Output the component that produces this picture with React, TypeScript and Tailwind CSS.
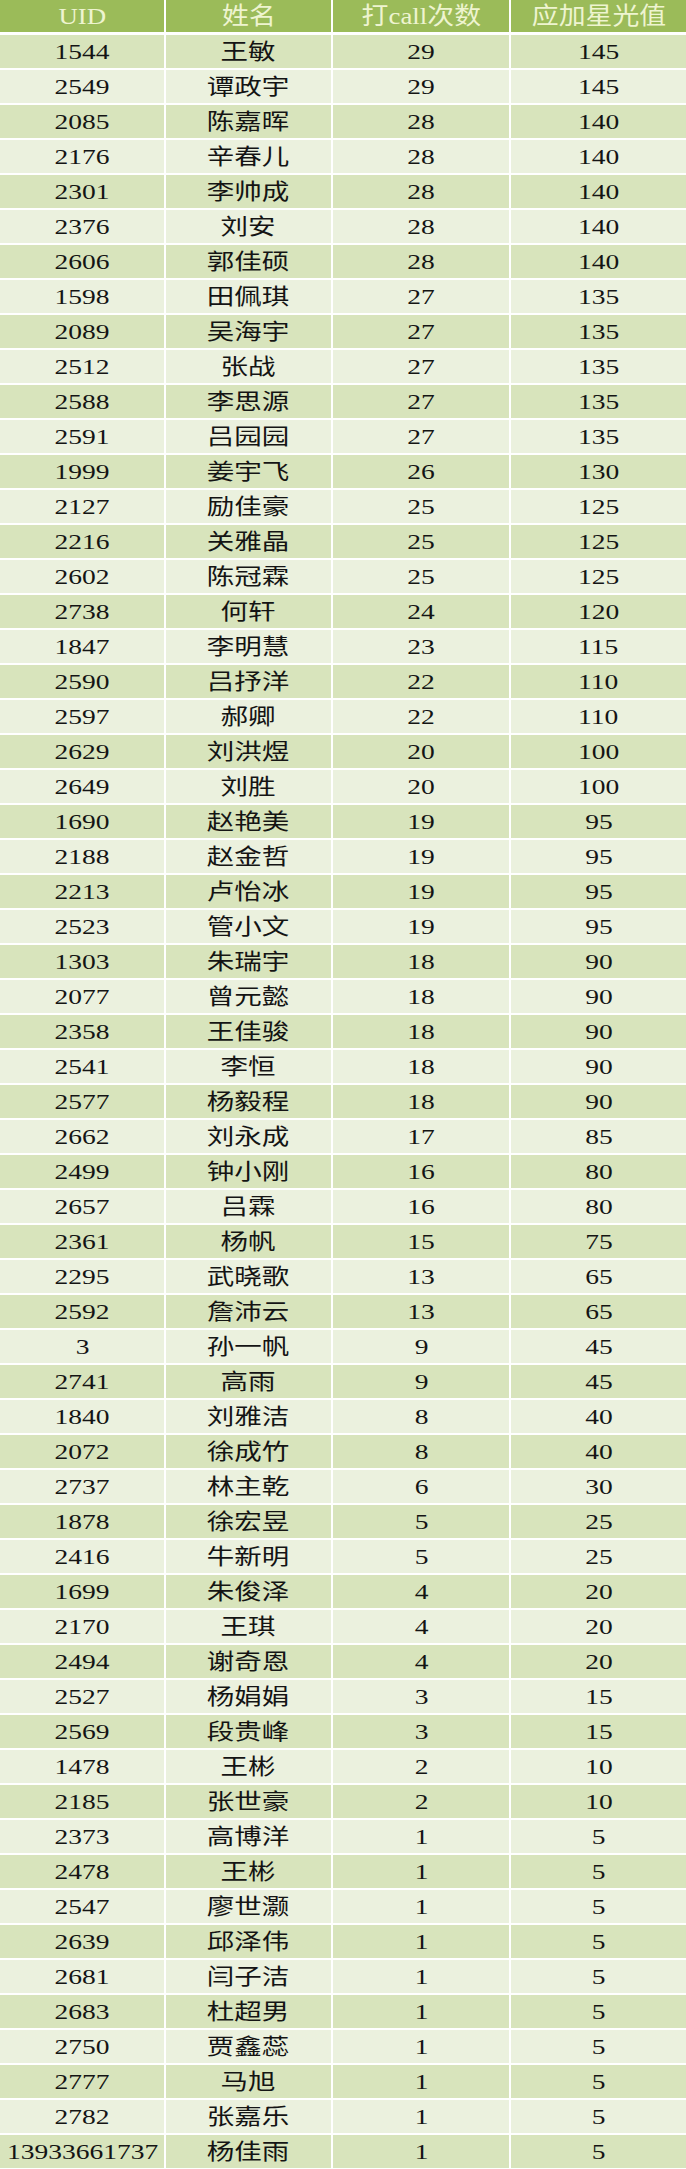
const rows: [string, string, number, number][] = [
  ["1544", "王敏", 29, 145],
  ["2549", "谭政宇", 29, 145],
  ["2085", "陈嘉晖", 28, 140],
  ["2176", "辛春儿", 28, 140],
  ["2301", "李帅成", 28, 140],
  ["2376", "刘安", 28, 140],
  ["2606", "郭佳硕", 28, 140],
  ["1598", "田佩琪", 27, 135],
  ["2089", "吴海宇", 27, 135],
  ["2512", "张战", 27, 135],
  ["2588", "李思源", 27, 135],
  ["2591", "吕园园", 27, 135],
  ["1999", "姜宇飞", 26, 130],
  ["2127", "励佳豪", 25, 125],
  ["2216", "关雅晶", 25, 125],
  ["2602", "陈冠霖", 25, 125],
  ["2738", "何轩", 24, 120],
  ["1847", "李明慧", 23, 115],
  ["2590", "吕抒洋", 22, 110],
  ["2597", "郝卿", 22, 110],
  ["2629", "刘洪煜", 20, 100],
  ["2649", "刘胜", 20, 100],
  ["1690", "赵艳美", 19, 95],
  ["2188", "赵金哲", 19, 95],
  ["2213", "卢怡冰", 19, 95],
  ["2523", "管小文", 19, 95],
  ["1303", "朱瑞宇", 18, 90],
  ["2077", "曾元懿", 18, 90],
  ["2358", "王佳骏", 18, 90],
  ["2541", "李恒", 18, 90],
  ["2577", "杨毅程", 18, 90],
  ["2662", "刘永成", 17, 85],
  ["2499", "钟小刚", 16, 80],
  ["2657", "吕霖", 16, 80],
  ["2361", "杨帆", 15, 75],
  ["2295", "武晓歌", 13, 65],
  ["2592", "詹沛云", 13, 65],
  ["3", "孙一帆", 9, 45],
  ["2741", "高雨", 9, 45],
  ["1840", "刘雅洁", 8, 40],
  ["2072", "徐成竹", 8, 40],
  ["2737", "林主乾", 6, 30],
  ["1878", "徐宏昱", 5, 25],
  ["2416", "牛新明", 5, 25],
  ["1699", "朱俊泽", 4, 20],
  ["2170", "王琪", 4, 20],
  ["2494", "谢奇恩", 4, 20],
  ["2527", "杨娟娟", 3, 15],
  ["2569", "段贵峰", 3, 15],
  ["1478", "王彬", 2, 10],
  ["2185", "张世豪", 2, 10],
  ["2373", "高博洋", 1, 5],
  ["2478", "王彬", 1, 5],
  ["2547", "廖世灏", 1, 5],
  ["2639", "邱泽伟", 1, 5],
  ["2681", "闫子洁", 1, 5],
  ["2683", "杜超男", 1, 5],
  ["2750", "贾鑫蕊", 1, 5],
  ["2777", "马旭", 1, 5],
  ["2782", "张嘉乐", 1, 5],
  ["13933661737", "杨佳雨", 1, 5],
];

const headers = ["UID", "姓名", "打call次数", "应加星光值"];

const gridCols = "grid grid-cols-[164px_165px_176px_175px] gap-x-[2px]";

export default function App() {
  return (
    <div
      className="w-[686px] bg-white flex flex-col"
      style={{ fontFamily: '"Liberation Serif", "Noto Sans CJK SC", serif' }}
    >
      {/* header */}
      <div className={`${gridCols} mb-[3px]`}>
        {headers.map((h) => (
          <div
            key={h}
            className="h-[32px] bg-[#9bbb59] flex items-center justify-center text-[#eef4d0] text-[24px] leading-none"
          >
            <span className="inline-block scale-x-[1.12]">{h}</span>
          </div>
        ))}
      </div>

      {/* body */}
      <div className="flex flex-col gap-y-[2px]">
        {rows.map((r, i) => {
          const bg = i % 2 === 0 ? "bg-[#d8e4bc]" : "bg-[#ebf1de]";
          return (
            <div key={r[0] + r[1]} className={gridCols}>
              {r.map((c, j) => (
                <div
                  key={j}
                  className={`h-[33px] ${bg} flex items-center justify-center text-[#141414] text-[22px] leading-none`}
                >
                  <span className="inline-block scale-x-[1.25] whitespace-nowrap">{c}</span>
                </div>
              ))}
            </div>
          );
        })}
      </div>
    </div>
  );
}
